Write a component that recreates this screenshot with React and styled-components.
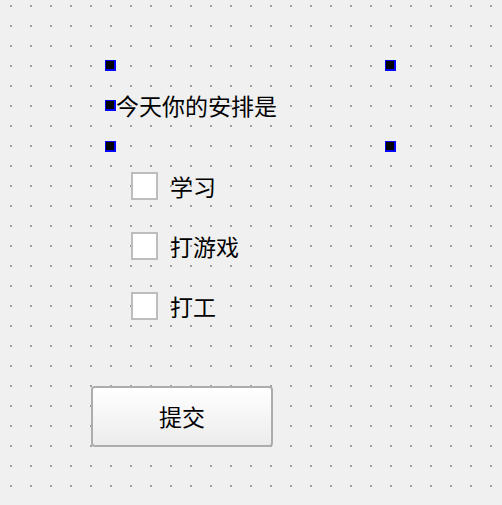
import React, { useState } from "react";
import styled, { createGlobalStyle } from "styled-components";

const GlobalStyle = createGlobalStyle`
  html, body {
    margin: 0;
    padding: 0;
    background: #f0f0f0;
  }
`

const Canvas = styled.div`
  width: 502px;
  height: 505px;
  box-sizing: border-box;
  padding-top: 65px;
  display: flex;
  flex-direction: column;
  align-items: flex-start;
  background-color: #a0a0a0;
  background-image:
    linear-gradient(to right, #f0f0f0 18px, transparent 18px),
    linear-gradient(to bottom, #f0f0f0 18px, #a0a0a0 18px);
  background-size: 20px 20px;
  background-position: 12px 7px;
  font-family: "Noto Sans CJK SC", "Noto Sans", sans-serif;
  color: #000;
  overflow: hidden;
`

const LabelBox = styled.div`
  position: relative;
  margin-left: 110px;
  width: 281px;
  height: 81px;
  box-sizing: border-box;
  padding-left: 6px;
  display: flex;
  align-items: center;
  font-size: 23px;
  line-height: 1;
`

const Handle = styled.span`
  position: absolute;
  left: ${p => p.$x}px;
  top: ${p => p.$y}px;
  width: 11px;
  height: 11px;
  box-sizing: border-box;
  background: #000;
  border: 1px solid #0000ff;
  border-right-width: 2px;
  border-bottom-width: 2px;
`

const CheckList = styled.div`
  margin-top: 26px;
  margin-left: 131px;
  display: flex;
  flex-direction: column;
  gap: 32px;
`

const CheckRow = styled.label`
  display: flex;
  align-items: center;
  gap: 12px;
  height: 28px;
  font-size: 23px;
  line-height: 1;
  cursor: default;
`

const Box = styled.span`
  width: 27px;
  height: 28px;
  box-sizing: border-box;
  border: 2px solid #bdbdbd;
  background: #fff;
  display: flex;
  align-items: center;
  justify-content: center;
  font-size: 18px;
`

const SubmitButton = styled.button`
  margin-top: 66px;
  margin-left: 91px;
  width: 182px;
  height: 61px;
  box-sizing: border-box;
  border: 2px solid #adadad;
  border-radius: 4px;
  background: linear-gradient(to bottom, #ffffff, #ececec);
  font-family: inherit;
  font-size: 23px;
  line-height: 1;
  color: #000;
  padding: 0;
`

const options = ["学习", "打游戏", "打工"];

function CheckBox({ text }) {
  const [checked, setChecked] = useState(false);
  return (
    <CheckRow onClick={() => setChecked(!checked)}>
      <Box>{checked ? "✓" : ""}</Box>
      <span>{text}</span>
    </CheckRow>
  )
}

export default function App() {
  return (
    <Canvas>
      <GlobalStyle />
      <LabelBox>
        今天你的安排是
        <Handle $x={-5} $y={-5} />
        <Handle $x={275} $y={-5} />
        <Handle $x={-5} $y={35} />
        <Handle $x={-5} $y={76} />
        <Handle $x={275} $y={76} />
      </LabelBox>
      <CheckList>
        {options.map(o => <CheckBox key={o} text={o} />)}
      </CheckList>
      <SubmitButton>提交</SubmitButton>
    </Canvas>
  )
}
